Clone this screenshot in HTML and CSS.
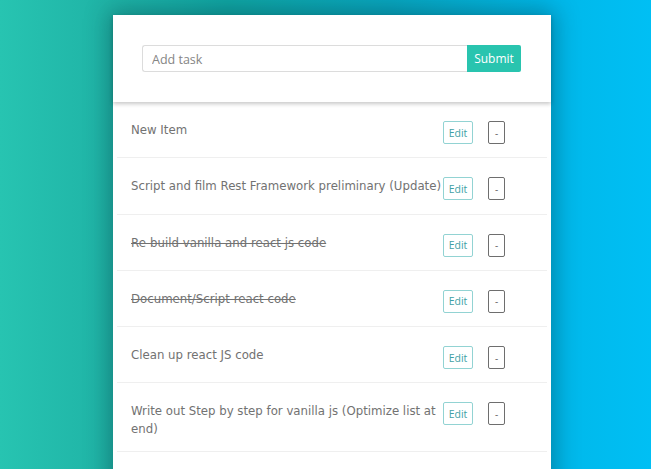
FILE: index.html
```html
<!DOCTYPE html>
<html>
<head>
<meta charset="utf-8">
<link rel="stylesheet" href="styles.css">
</head>
<body>
<div class="page">
  <div class="card">
    <div class="header">
      <form class="form">
        <input class="input" type="text" placeholder="Add task">
        <button class="submit" type="button">Submit</button>
      </form>
    </div>
    <ul class="list">
      <li class="row"><span class="title">New Item</span><button class="edit">Edit</button><button class="del">-</button></li>
      <li class="row"><span class="title">Script and film Rest Framework preliminary (Update)</span><button class="edit">Edit</button><button class="del">-</button></li>
      <li class="row"><span class="title done">Re-build vanilla and react js code</span><button class="edit">Edit</button><button class="del">-</button></li>
      <li class="row"><span class="title done">Document/Script react code</span><button class="edit">Edit</button><button class="del">-</button></li>
      <li class="row"><span class="title">Clean up react JS code</span><button class="edit">Edit</button><button class="del">-</button></li>
      <li class="row"><span class="title">Write out Step by step for vanilla js (Optimize list at end)</span><button class="edit">Edit</button><button class="del">-</button></li>
      <li class="row"><span class="title">&nbsp;</span></li>
    </ul>
  </div>
</div>
</body>
</html>
```

FILE: styles.css
```css
html, body {
  margin: 0;
  padding: 0;
  height: 100%;
  overflow: hidden;
}
body {
  background: linear-gradient(to right, #27c4b1 0%, #1fb3a6 17%, #10a6a4 35%, #08a7c0 60%, #00b8ea 85%, #00bff4 100%);
  font-family: "Open Sans", sans-serif;
}
.page {
  padding: 15px 0 0 113px;
}
.card {
  width: 438px;
  background: #fff;
  box-shadow: 0 0 22px 4px rgba(0, 40, 50, 0.35);
  min-height: 600px;
}
.header {
  padding: 30px 30px 30px 29px;
  box-shadow: 0 2px 4px rgba(0, 0, 0, 0.22);
  position: relative;
}
.form {
  display: flex;
  margin: 0;
  height: 27px;
}
.input {
  flex: 1;
  box-sizing: border-box;
  height: 27px;
  border: 1px solid #dcdcdc;
  border-right: none;
  border-radius: 3px 0 0 3px;
  padding: 1px 9px 0;
  font-family: "Open Sans", sans-serif;
  font-size: 12.5px;
  color: #555;
  outline: none;
}
.input::placeholder {
  color: #858585;
}
.submit {
  width: 54px;
  height: 27px;
  border: none;
  background: #29c4af;
  color: #fff;
  font-family: "Open Sans", sans-serif;
  font-size: 12px;
  padding: 0;
  border-radius: 0 2px 2px 0;
}
.list {
  list-style: none;
  margin: 0 4px;
  padding: 0;
}
.row {
  display: flex;
  align-items: flex-start;
  box-sizing: border-box;
  min-height: 56.3px;
  padding: 19px 42px 13px 14px;
  border-bottom: 1px solid #efefef;
}
.title {
  flex: 1;
  line-height: 18px;
  font-family: "DejaVu Sans", sans-serif;
  font-size: 11.75px;
  color: #727272;
}
.done {
  text-decoration: line-through;
}
.edit {
  width: 30px;
  height: 23px;
  box-sizing: border-box;
  border: 1px solid #92d3d3;
  border-radius: 2px;
  background: #fff;
  color: #3e9fa5;
  font-family: "Open Sans", sans-serif;
  font-size: 10.5px;
  padding: 0;
  margin-right: 15px;
}
.del {
  width: 17px;
  height: 23px;
  box-sizing: border-box;
  border: 1px solid #6e6e6e;
  border-radius: 2px;
  background: #fff;
  color: #666;
  font-family: "Open Sans", sans-serif;
  font-size: 10px;
  padding: 0;
}
```
